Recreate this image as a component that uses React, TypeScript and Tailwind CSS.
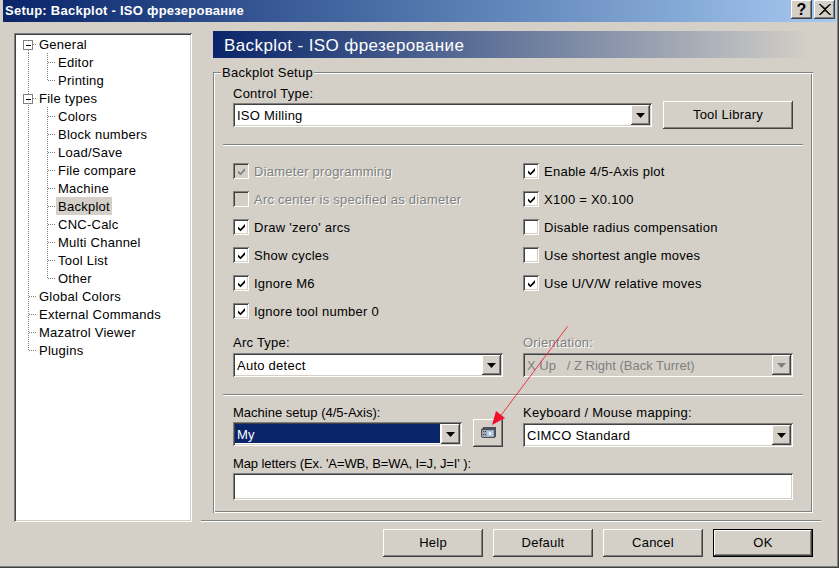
const raised = "shadow-[inset_-1px_-1px_0_#404040,inset_1px_1px_0_#fff,inset_-2px_-2px_0_#808080]";
const sunken = "shadow-[inset_1px_1px_0_#808080,inset_-1px_-1px_0_#fff,inset_2px_2px_0_#404040,inset_-2px_-2px_0_#d4d0c8]";

type TreeRow = {
  label: string;
  child?: boolean;
  last?: boolean;
  box?: boolean;
  selected?: boolean;
  first?: boolean;
};

const treeRows: TreeRow[] = [
  { label: "General", box: true, first: true },
  { label: "Editor", child: true },
  { label: "Printing", child: true, last: true },
  { label: "File types", box: true },
  { label: "Colors", child: true },
  { label: "Block numbers", child: true },
  { label: "Load/Save", child: true },
  { label: "File compare", child: true },
  { label: "Machine", child: true },
  { label: "Backplot", child: true, selected: true },
  { label: "CNC-Calc", child: true },
  { label: "Multi Channel", child: true },
  { label: "Tool List", child: true },
  { label: "Other", child: true, last: true },
  { label: "Global Colors" },
  { label: "External Commands" },
  { label: "Mazatrol Viewer" },
  { label: "Plugins", last: true },
];

function Connector({ row }: { row: TreeRow }) {
  const isLastTop = !row.child && row.last;
  return (
    <svg width={row.child ? 40 : 21} height={18} className="shrink-0" shapeRendering="crispEdges">
      <g stroke="#808080" strokeDasharray="1 1" fill="none">
        <path d={`M12.5 ${row.first ? 15 : 0}V${isLastTop ? 9 : 18}`} />
        {row.child && <path d={`M31.5 0V${row.last ? 9 : 18}`} />}
        {row.child && <path d="M32 9.5H40" />}
        {!row.child && !row.box && <path d="M13 9.5H21" />}
        {row.box && <path d="M17 9.5H21" />}
      </g>
      {row.box && (
        <g shapeRendering="crispEdges">
          <rect x="7.5" y="5.5" width="9" height="9" fill="#fff" stroke="#808080" />
          <path d="M10 10.5H15" stroke="#000" />
        </g>
      )}
    </svg>
  );
}

function Tree() {
  return (
    <div className={`w-[178px] h-[489px] mt-[2px] bg-white shrink-0 p-[2px] ${sunken}`}>
      {treeRows.map((row) => (
        <div key={row.label} className="flex h-[18px]">
          <Connector row={row} />
          <span className={`px-[2px] h-[18px] leading-[20px] whitespace-nowrap ${row.selected ? "bg-[#d4d0c8]" : ""}`}>
            {row.label}
          </span>
        </div>
      ))}
    </div>
  );
}

function Check({ label, checked, disabled }: { label: string; checked?: boolean; disabled?: boolean }) {
  return (
    <div className="flex items-center h-[28px]">
      <div className={`relative w-4 h-4 shrink-0 flex items-center justify-center ${sunken} ${disabled ? "bg-[#d4d0c8]" : "bg-white"}`}>
        {checked && (
          <svg width="9" height="9" viewBox="0 0 9 9">
            <path d="M1 3.5l2.5 2.5L8 1v2.8L3.5 8.2 1 6z" fill={disabled ? "#808080" : "#000"} />
          </svg>
        )}
      </div>
      <span className={`ml-[5px] pt-px whitespace-nowrap ${disabled ? "text-[#808080] [text-shadow:1px_1px_0_#fff]" : ""}`}>
        {label}
      </span>
    </div>
  );
}

function ArrowButton({ disabled }: { disabled?: boolean }) {
  return (
    <div className={`w-[19px] h-[20px] bg-[#d4d0c8] flex items-center justify-center shrink-0 ${raised}`}>
      <svg width="9" height="5" viewBox="0 0 9 5">
        <path d="M0 0h9L4.5 5z" fill={disabled ? "#808080" : "#000"} />
      </svg>
    </div>
  );
}

function Combo({
  value,
  width,
  selected,
  disabled,
}: {
  value: string;
  width: string;
  selected?: boolean;
  disabled?: boolean;
}) {
  return (
    <div className={`${width} h-[24px] flex items-center p-[2px] shrink-0 ${sunken} ${disabled ? "bg-[#d4d0c8]" : "bg-white"}`}>
      <div className="flex-1 h-[20px] pr-[1px]">
        <div
          className={`h-[19px] pl-[2px] leading-[21px] whitespace-pre ${selected ? "bg-[#0a246a] text-white" : ""} ${
            disabled ? "text-[#808080] tracking-normal" : ""
          }`}
        >
          {value}
        </div>
      </div>
      <ArrowButton disabled={disabled} />
    </div>
  );
}

function Label({ children, disabled, className = "" }: { children: string; disabled?: boolean; className?: string }) {
  return (
    <div className={`h-4 leading-[18px] whitespace-nowrap ${className} ${disabled ? "text-[#808080] [text-shadow:1px_1px_0_#fff]" : ""}`}>
      {children}
    </div>
  );
}

function Divider({ className = "" }: { className?: string }) {
  return <div className={`h-[2px] border-t border-t-[#808080] border-b border-b-white ${className}`} />;
}

function DialogButton({ label, isDefault, width = "w-[100px]" }: { label: string; isDefault?: boolean; width?: string }) {
  return (
    <button
      className={`${width} h-[28px] text-center ${
        isDefault
          ? "border border-black shadow-[inset_-1px_-1px_0_#404040,inset_1px_1px_0_#fff,inset_-2px_-2px_0_#808080]"
          : raised
      }`}
    >
      {label}
    </button>
  );
}

function MachineIcon() {
  return (
    <svg width="16" height="13" viewBox="0 0 16 13" shapeRendering="crispEdges">
      <path d="M3 0h13v10h-1v1H2v-1H1V2h1V1h1z" fill="#4c5058" />
      <rect x="2" y="3" width="12" height="7" fill="#a3a8b0" />
      <rect x="7" y="4" width="6" height="5" fill="#a8cdf0" />
      <rect x="9" y="5" width="2" height="3" fill="#eaf4fd" />
      <rect x="3" y="4" width="1" height="1" fill="#3a3d44" />
      <rect x="5" y="4" width="1" height="1" fill="#3a3d44" />
      <rect x="3" y="7" width="1" height="1" fill="#3a3d44" />
      <rect x="5" y="7" width="1" height="1" fill="#3a3d44" />
    </svg>
  );
}

function SetupGroup() {
  return (
    <div className="relative mt-[14px] w-[600px] h-[441px] px-5 pt-[13px] shadow-[inset_1px_1px_0_#808080,inset_-1px_-1px_0_#fff,inset_2px_2px_0_#fff,inset_-2px_-2px_0_#808080]">
      <div className="absolute left-[8px] top-[-8px] h-4 leading-[18px] px-[1px] bg-[#d4d0c8]">Backplot Setup</div>

      <Label>Control Type:</Label>
      <div className="flex items-center justify-between h-[28px]">
        <Combo value="ISO Milling" width="w-[419px]" />
        <DialogButton label="Tool Library" width="w-[130px]" />
      </div>

      <Divider className="mt-[15px] -mx-[10px]" />

      <div className="grid grid-cols-[290px_270px] mt-[11px]">
        <div>
          <Check label="Diameter programming" checked disabled />
          <Check label="Arc center is specified as diameter" disabled />
          <Check label="Draw 'zero' arcs" checked />
          <Check label="Show cycles" checked />
          <Check label="Ignore M6" checked />
          <Check label="Ignore tool number 0" checked />
        </div>
        <div>
          <Check label="Enable 4/5-Axis plot" checked />
          <Check label="X100 = X0.100" checked />
          <Check label="Disable radius compensation" />
          <Check label="Use shortest angle moves" />
          <Check label="Use U/V/W relative moves" checked />
        </div>
      </div>

      <div className="grid grid-cols-[290px_270px] mt-[9px]">
        <div>
          <Label>Arc Type:</Label>
          <div className="mt-[3px]">
            <Combo value="Auto detect" width="w-[270px]" />
          </div>
        </div>
        <div>
          <Label disabled>Orientation:</Label>
          <div className="mt-[3px]">
            <Combo value="X Up   / Z Right (Back Turret)" width="w-[270px]" disabled />
          </div>
        </div>
      </div>

      <Divider className="mt-[17px] -mx-[10px]" />

      <div className="grid grid-cols-[290px_270px] mt-[8px]">
        <div>
          <Label className="tracking-normal">Machine setup (4/5-Axis):</Label>
          <div className="flex items-start">
            <div className="mt-[2px]">
              <Combo value="My" width="w-[229px]" selected />
            </div>
            <div className={`ml-[11px] -mt-[1px] w-[30px] h-[28px] flex items-center justify-center ${raised}`}>
              <MachineIcon />
            </div>
          </div>
        </div>
        <div>
          <Label>Keyboard / Mouse mapping:</Label>
          <div className="mt-[3px]">
            <Combo value="CIMCO Standard" width="w-[270px]" />
          </div>
        </div>
      </div>

      <div className="mt-[8px]">
        <Label className="tracking-[-0.1px]">Map letters (Ex. 'A=WB, B=WA, I=J, J=I' ):</Label>
      </div>
      <div className={`mt-[2px] h-[27px] w-[560px] bg-white ${sunken}`} />

      {/* red annotation arrow on top of the dialog */}
      <svg className="absolute left-[260px] top-[240px] pointer-events-none" width="120" height="120" viewBox="0 0 120 120">
        <path d="M94.5 14.5L26 106" stroke="#f0304a" strokeWidth="1" fill="none" />
        <path d="M19 113L23 99L32 106z" fill="#f0102a" />
      </svg>
    </div>
  );
}

export default function App() {
  return (
    <div className="w-[839px] h-[568px] overflow-hidden bg-[#d4d0c8] px-[3px] text-[13px] text-black font-['Liberation_Sans',Arial,sans-serif] tracking-[0.25px] shadow-[inset_-1px_-1px_0_#404040,inset_-2px_-2px_0_#808080]">
      <div className="h-[22px] flex items-start justify-between bg-gradient-to-r from-[#0a246a] to-[#a6caf0] pl-[2px] pr-[1px]">
        <span className="text-white font-bold leading-[21px] whitespace-nowrap">Setup: Backplot - ISO фрезерование</span>
        <div className="flex gap-[2px]">
          <div className={`w-[21px] h-[19px] bg-[#d4d0c8] flex items-center justify-center font-bold text-[16px] leading-none ${raised}`}>?</div>
          <div className={`w-[21px] h-[19px] bg-[#d4d0c8] flex items-center justify-center ${raised}`}>
            <svg width="12" height="11" viewBox="0 0 12 11">
              <path d="M1 0l5 4.2L11 0h1L6.6 5.5 12 11h-1.2L6 6.6 1.2 11H0l5.4-5.5L0 0z" fill="#000" stroke="#000" strokeWidth="0.6" />
            </svg>
          </div>
        </div>
      </div>

      <div className="flex pl-[11px] pt-[9px]">
        <Tree />
        <div className="w-[620px] ml-[9px]">
          <div className="ml-[12px] w-[600px]">
            <div className="h-[27px] flex items-center pl-[11px] pt-px bg-gradient-to-r from-[#0a246a] to-[#d4d0c8] text-white text-[17px] leading-none tracking-[0.4px]">
              Backplot - ISO фрезерование
            </div>
            <SetupGroup />
          </div>
          <Divider className="mt-[7px]" />
          <div className="flex justify-end gap-[10px] pr-[8px] mt-[7px]">
            <DialogButton label="Help" />
            <DialogButton label="Default" />
            <DialogButton label="Cancel" />
            <DialogButton label="OK" isDefault />
          </div>
        </div>
      </div>
    </div>
  );
}
